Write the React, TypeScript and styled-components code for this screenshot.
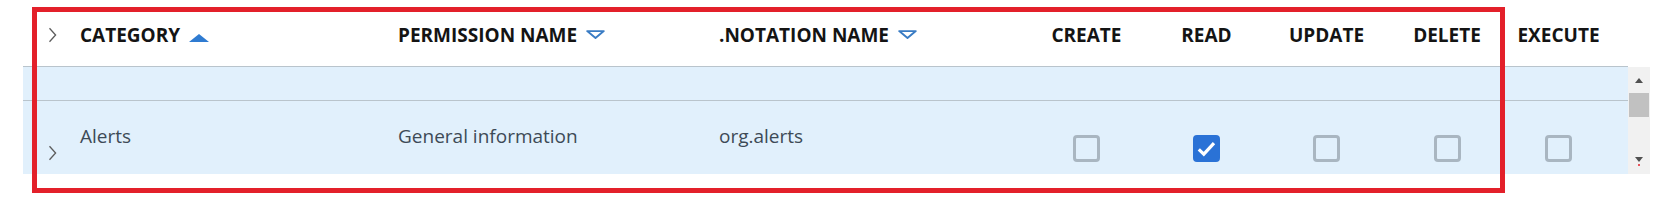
import React from "react";
import styled, { createGlobalStyle } from "styled-components";

const GlobalStyle = createGlobalStyle`
  html, body {
    margin: 0;
    padding: 0;
    background: #ffffff;
  }
  body {
    font-family: "Open Sans", "Liberation Sans", sans-serif;
  }
`;

const gridColumns = "57px 318px 321px 307px 121px 119px 121px 120px 103px 18px";
const rowBlue = "#e1f0fc";
const lineColor = "#b9c4cc";

type Column = {
  label: string;
  sort?: "asc" | "none";
  center?: boolean;
};

const columns: Column[] = [
  { label: "CATEGORY", sort: "asc" },
  { label: "PERMISSION NAME", sort: "none" },
  { label: ".NOTATION NAME", sort: "none" },
  { label: "CREATE", center: true },
  { label: "READ", center: true },
  { label: "UPDATE", center: true },
  { label: "DELETE", center: true },
  { label: "EXECUTE", center: true },
];

const rows = [
  {
    category: "Alerts",
    permission: "General information",
    notation: "org.alerts",
    flags: [false, true, false, false, false],
  },
];

const Page = styled.div`
  position: relative;
  width: 1670px;
  height: 219px;
  padding-left: 23px;
  box-sizing: border-box;
  overflow: hidden;
`;

const Table = styled.div`
  width: 1627px;
  display: flex;
  flex-direction: column;
`;

const HeaderRow = styled.div`
  display: grid;
  grid-template-columns: ${gridColumns};
  align-items: center;
  width: 1605px;
  height: 67px;
  padding-top: 3px;
  box-sizing: border-box;
  border-bottom: 1px solid ${lineColor};
  background: #ffffff;
`;

const HeaderCell = styled.div<{ $center?: boolean }>`
  font-size: 19px;
  font-weight: 700;
  line-height: 26px;
  color: #141414;
  white-space: nowrap;
  text-align: ${({ $center }) => ($center ? "center" : "left")};
`;

const SortIcon = styled.svg<{ $lift: number }>`
  margin-left: 9px;
  vertical-align: ${({ $lift }) => $lift}px;
`;

const ExpanderCell = styled.div<{ $top?: number }>`
  display: flex;
  padding-left: 25px;
  padding-top: ${({ $top }) => $top ?? 0}px;
`;

const Body = styled.div`
  display: flex;
`;

const Rows = styled.div`
  width: 1605px;
  display: flex;
  flex-direction: column;
`;

const BlankRow = styled.div`
  height: 34px;
  box-sizing: border-box;
  background: ${rowBlue};
  border-bottom: 1px solid ${lineColor};
`;

const DataRow = styled.div`
  display: grid;
  grid-template-columns: ${gridColumns};
  align-items: start;
  height: 73px;
  background: ${rowBlue};
`;

const TextCell = styled.div`
  padding-top: 22px;
  font-size: 19px;
  line-height: 26px;
  color: #3d4a56;
  white-space: nowrap;
`;

const CheckCell = styled.div`
  display: flex;
  justify-content: center;
  padding-top: 34px;
`;

const Box = styled.div<{ $checked: boolean }>`
  width: 27px;
  height: 27px;
  box-sizing: border-box;
  border-radius: 4px;
  display: flex;
  align-items: center;
  justify-content: center;
  border: 3px solid ${({ $checked }) => ($checked ? "#2a72d6" : "#a9b6c1")};
  background: ${({ $checked }) => ($checked ? "#2a72d6" : "transparent")};
`;

const Scrollbar = styled.div`
  width: 22px;
  background: #f1f1f1;
  display: flex;
  flex-direction: column;
`;

const ArrowButton = styled.div`
  height: 26px;
  display: flex;
  flex-direction: column;
  align-items: center;
  justify-content: center;
  gap: 2px;
`;

const Thumb = styled.div`
  height: 24px;
  margin: 0 1px;
  background: #c1c1c1;
`;

const Track = styled.div`
  flex: 1;
`;

const Dot = styled.span`
  width: 2px;
  height: 2px;
  border-radius: 1px;
  background: #e3202a;
`;

const Annotation = styled.div`
  position: absolute;
  left: 32px;
  top: 7px;
  width: 1473px;
  height: 186px;
  box-sizing: border-box;
  border: 5px solid #e3202a;
  pointer-events: none;
`;

const Chevron = () => (
  <svg width="9" height="16" viewBox="0 0 9 16">
    <path d="M1.5 1.2 L7.6 8 L1.5 14.8" fill="none" stroke="#5c5c5c" strokeWidth="1.3" />
  </svg>
);

const SortArrow = ({ sort }: { sort: "asc" | "none" }) =>
  sort === "asc" ? (
    <SortIcon $lift={0} width="20" height="8" viewBox="0 0 20 8">
      <polygon points="0,8 10,0 20,8" fill="#2f7bd1" />
    </SortIcon>
  ) : (
    <SortIcon $lift={3} width="19" height="9" viewBox="0 0 19 9">
      <polygon points="1.2,1.1 17.8,1.1 9.5,7.9" fill="none" stroke="#3a7cc4" strokeWidth="1.9" strokeLinejoin="round" />
    </SortIcon>
  );

const Checkbox = ({ checked }: { checked: boolean }) => (
  <Box $checked={checked}>
    {checked && (
      <svg width="19" height="16" viewBox="0 0 19 16">
        <path d="M1.8 8.4 L6.8 13.2 L17 2.2" fill="none" stroke="#ffffff" strokeWidth="3.2" />
      </svg>
    )}
  </Box>
);

const App: React.FC = () => (
  <>
    <GlobalStyle />
    <Page>
      <Table>
        <HeaderRow>
          <ExpanderCell>
            <Chevron />
          </ExpanderCell>
          {columns.map((col) => (
            <HeaderCell key={col.label} $center={col.center}>
              {col.label}
              {col.sort && <SortArrow sort={col.sort} />}
            </HeaderCell>
          ))}
          <div />
        </HeaderRow>
        <Body>
          <Rows>
            <BlankRow />
            {rows.map((row) => (
              <DataRow key={row.notation}>
                <ExpanderCell $top={44}>
                  <Chevron />
                </ExpanderCell>
                <TextCell>{row.category}</TextCell>
                <TextCell>{row.permission}</TextCell>
                <TextCell>{row.notation}</TextCell>
                {row.flags.map((flag, i) => (
                  <CheckCell key={i}>
                    <Checkbox checked={flag} />
                  </CheckCell>
                ))}
                <div />
              </DataRow>
            ))}
          </Rows>
          <Scrollbar>
            <ArrowButton>
              <svg width="8" height="5" viewBox="0 0 8 5">
                <polygon points="0,5 4,0 8,5" fill="#505050" />
              </svg>
            </ArrowButton>
            <Thumb />
            <Track />
            <ArrowButton>
              <svg width="8" height="5" viewBox="0 0 8 5">
                <polygon points="0,0 8,0 4,5" fill="#505050" />
              </svg>
              <Dot />
            </ArrowButton>
          </Scrollbar>
        </Body>
      </Table>
      <Annotation />
    </Page>
  </>
);

export default App;
